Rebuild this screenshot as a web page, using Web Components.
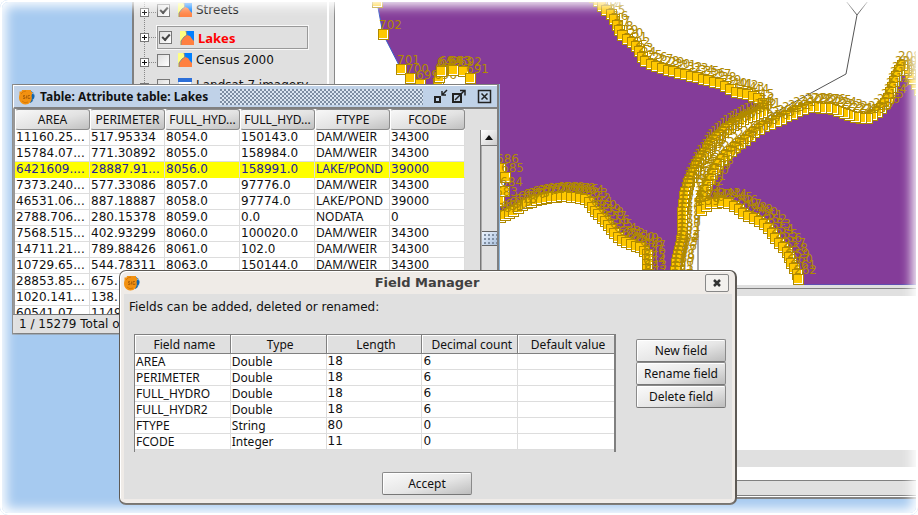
<!DOCTYPE html>
<html lang="en">
<head>
<meta charset="utf-8">
<title>Field Manager</title>
<style>
  html, body { height: 100%; margin: 0; overflow: hidden; }
  body { font: 12px/16px "Noto Sans", "DejaVu Sans", sans-serif; color: #111; background: #fff; }
</style>
</head>
<body>
<gis-desktop>
  <main-window>
    <layer-tree slot="toc">
      <layer-item checked>Streets</layer-item>
      <layer-item checked active>Lakes</layer-item>
      <layer-item>Census 2000</layer-item>
      <layer-item kind="raster">Landsat 7 imagery</layer-item>
    </layer-tree>
    <map-view slot="map"></map-view>
  </main-window>
  <table-window caption="Table: Attribute table: Lakes"></table-window>
  <field-dialog caption="Field Manager"></field-dialog>
</gis-desktop>

<script>
const define = (name, html, setup) => {
  const tpl = document.createElement('template');
  tpl.innerHTML = html;
  customElements.define(name, class extends HTMLElement {
    constructor() {
      super();
      this.attachShadow({ mode: 'open' }).append(tpl.content.cloneNode(true));
    }
    connectedCallback() { if (setup && !this.ready) { this.ready = true; setup(this, this.shadowRoot); } }
  });
};

define('app-logo', `
<style>:host { display: block; width: 16px; height: 16px; flex: none; } svg { display: block; }</style>
<svg width="16" height="16" viewBox="0 0 16 16" aria-hidden="true">
  <path d="M12 2q4 2 3.500 6q-1 4-4 6l-2-3z" fill="#1265ad"/>
  <path d="M13 4l2 1M13.500 11l2-1" stroke="#9cc7ea"/>
  <path d="M3 1h9v2h1.500l-1 4q1 3-1 6q-2 2.500-5 2.500q-4 0-6-4q-1-3 0-6V2.500h2z" fill="#f29111"/>
  <path d="M2 5q2-3 5-3M3 12q3 3 6 1" stroke="#d87905" fill="none"/>
  <path d="M6 6.500H4.500V8H6V9.500H4M7.500 6.500v3M11 6.500H9v3h2V8.500" stroke="#a45b08" fill="none" stroke-width=".8"/>
</svg>`);

define('push-button', `
<style>
  :host { display: block; }
  button { display: block; width: 100%; height: 23px; padding: 0 4px; font: 12px/16px "Noto Sans", sans-serif; color: #111;
    border: 1px solid #8a8a8a; border-bottom-color: #777; border-radius: 2px; box-shadow: inset 1px 1px #fff;
    background: linear-gradient(165deg, #fafafa 0%, #e6e6e6 55%, #bdbdbd 100%); white-space: nowrap; }
</style>
<button type="button"><slot></slot></button>`);

define('layer-item', `
<style>
  :host { display: flex; height: 25px; align-items: flex-start; font-family: "DejaVu Sans", sans-serif; }
  .knob { width: 9px; height: 9px; margin: 8px 0 0 4px; padding: 0; box-sizing: border-box; border: 1px solid #777; background:
    linear-gradient(#111,#111) center/5px 1px no-repeat, linear-gradient(#111,#111) center/1px 5px no-repeat, #fff; }
  .dots { width: 7px; margin-top: 12px; border-top: 1px dotted #888; }
  label { display: flex; align-items: center; gap: 8px; height: 20px; margin-left: 1px; white-space: nowrap; }
  :host([active]) label { width: 145px; margin-top: 1px; padding: 0 3px 0 1px; height: 21px; border: 1px solid #999; outline: 1px solid #f8f8f8;
    font: bold 13px/16px "Noto Sans", sans-serif; color: #f00; }
  input { appearance: none; box-sizing: border-box; width: 13px; height: 13px; margin: 0; border: 1px solid #777; background: linear-gradient(135deg,#ddd,#fff);
    display: grid; place-items: center; }
  input:checked::before { content: ""; width: 6px; height: 3px; border: solid #444; border-width: 0 0 2px 2px; transform: rotate(-48deg); margin-bottom: 2px; }
  svg { display: block; margin-right: -4px; }
</style>
<button class="knob" type="button" aria-label="Expand"></button><span class="dots"></span>
<label><input type="checkbox"><svg width="14" height="14" viewBox="0 0 14 14"></svg><slot></slot></label>`,
(host, root) => {
  root.querySelector('input').checked = host.hasAttribute('checked');
  root.querySelector('svg').innerHTML = host.getAttribute('kind') === 'raster'
    ? '<path d="M0 0h14v14H0z" fill="#fff" stroke="#7aa7e0"/><path d="M0 0h14v4H0z" fill="#2c6fd8"/><path d="M3 6h5v6H3z" fill="#f8a020"/><path d="M9 7h3v5H9z" fill="#bcd"/>'
    : '<path d="M0 0h14v14H0z" fill="#ffff80"/><path d="M6 0h8v14H8z" fill="#0080ff"/><path d="M1 14V10l3-4 3-2 3 1 2 3 2 2v4z" fill="#ff8040"/><path d="M6 0l1 4-3 2-3 4v4" fill="none" stroke="#888"/>';
});

define('layer-tree', `
<style>
  :host { display: block; height: 100%; background: repeating-linear-gradient(#0000 0 1px, #e0e0e0 1px 2px), linear-gradient(90deg, #e0e0e0 8px, #888 8px, #888 9px, #e0e0e0 9px); }
</style><slot></slot>`);

define('main-window', `
<style>
  :host { position: absolute; inset: 0 0 16px 132px; box-sizing: border-box; display: flex; flex-direction: column; background: #fff;
    border-left: 2px solid #808080; border-bottom: 2px solid #808080; }
  .top { display: flex; height: 285px; }
  .toc { width: 191px; border-left: 2px solid #e0e0e0; border-right: 2px solid #fff; overflow: hidden; }
  .split { width: 5px; background: #e0e0e0; border-right: 1px solid #888; }
  .map { flex: 1; min-width: 0; overflow: hidden; }
  .hsplit { height: 3px; background: #e0e0e0; border-bottom: 1px solid #808080; }
  .under { height: 7px; background: #e0e0e0; }
  .blank { flex: 1; background: #fff; }
  .bar { height: 17px; background: #e0e0e0; }
  .gap { height: 13px; }
  .status { height: 14px; background: #e0e0e0; border: solid #808080; border-width: 1px 0; margin-bottom: 1px; }
</style>
<div class="top"><div class="toc"><slot name="toc"></slot></div><div class="split"></div><div class="map"><slot name="map"></slot></div></div>
<div class="hsplit"></div><div class="under"></div><div class="blank"></div><div class="bar"></div><div class="gap"></div><div class="status"></div>`);

define('map-view', `
<style>:host { display: block; height: 100%; } svg { display: block; width: 100%; height: 100%; }
  text { font: 12px "DejaVu Sans", sans-serif; fill: #b08a00; }</style>
<svg viewBox="335 0 583 285" preserveAspectRatio="xMinYMin slice" role="img" aria-label="Lakes layer being edited">
  <g class="lakes" fill="#843c99" stroke="#3c5ec8"></g>
  <path d="M846 1L857 15L868 1M857 15L846 74L765 118M698 205V285" fill="none" stroke="#555"/>
  <g class="nodes" shape-rendering="crispEdges"></g>
</svg>`,
(host, root) => {
  const west = [[377,2],[383,34],[401,69],[410,78],[420,84],[437,86],[439,76],[443,68],[452,68],[463,71],[470,78],[492,110],[498,160],[505,177],[504,191],[500,202],[500,217]];
  const south = [[500,217],[510,213],[520,206],[535,200],[550,197],[563,196],[577,197],[587,200],[595,211],[606,222],[616,235],[625,242],[640,247],[647,254],[648,285]];
  const northEast = [[594,-3],[612,16],[622,35],[636,45],[643,60],[655,66],[680,73],[708,80],[722,84],[733,91],[748,94],[758,98],[764,104],[762,112]];
  const channelW = [[762,112],[745,118],[725,130],[710,144],[700,160],[690,178],[684,196],[682,215],[682,232],[680,248],[676,262],[674,285]];
  const northE = [[925,100],[915,82],[909,73],[902,65],[896,76],[892,88],[886,102],[879,111],[868,118],[857,118],[846,114],[834,109],[810,107],[796,112],[776,121],[762,127],[748,137],[733,149],[722,158],[714,170],[707,186],[701,198],[701,210]];
  const east = [[701,210],[709,203],[724,202],[735,206],[746,215],[760,221],[770,230],[777,241],[786,250],[791,262],[797,274],[800,285]];
  const path = a => 'M' + a.map(p => p.join(' ')).join('L') + 'Z';
  root.querySelector('.lakes').innerHTML =
    `<path d="${path([...west, ...south, ...[...channelW].reverse(), ...[...northEast].reverse()])}"/>` +
    `<path d="${path([...northE, ...east, [925,285]])}"/>`;
  const walk = (pts, step) => {
    const out = [];
    let rest = 0;
    for (let i = 1; i < pts.length; i++) {
      const [x0, y0] = pts[i - 1], [x1, y1] = pts[i], len = Math.hypot(x1 - x0, y1 - y0);
      let d = rest;
      for (; d < len; d += step) out.push([Math.round(x0 + (x1 - x0) * d / len), Math.round(y0 + (y1 - y0) * d / len)]);
      rest = d - len;
    }
    return out;
  };
  const label = ([x, y], n) => `<text x="${x - 4}" y="${y - 5}">${n}</text>`;
  const node = ([x, y]) => `<path d="M${x - 5} ${y - 5}h11v11h-11z" fill="#b08a00"/><path d="M${x - 4} ${y - 4}h9v9h-9z" fill="#fff"/><path d="M${x - 4} ${y - 4}h8v8h-8z" fill="#ffc800"/>`;
  let svg = '';
  const chain = (pts, first, dir) => {
    svg += pts.map(node).join('') + pts.map((p, i) => label(p, first + dir * i)).join('');
  };
  chain(west.slice(0, 5), 703, -1);
  chain([[438,84],[439,77],[443,70],[452,70]], 696, -1);
  chain([[441,71],[453,70]], 642, 1);
  chain([[463,71],[470,78]], 692, -1);
  chain([[500,168],[505,177],[504,191],[499,201]], 686, -1);
  chain(walk(south, 5), 682, -1);
  chain(walk(northEast, 6), 10, 1);
  chain(walk(northE, 6), 201, 1);
  chain(walk(channelW, 4), 141, 1);
  chain(walk(east, 6), 239, 1);
  root.querySelector('.nodes').innerHTML = svg;
});

define('attribute-table', `
<style>
  :host { display: block; height: 205px; overflow: hidden; background: #e0e0e0; }
  table { width: 450px; border-collapse: separate; border-spacing: 0; table-layout: fixed; background: #fff; }
  th, td { box-sizing: border-box; padding: 0; overflow: hidden; white-space: nowrap; }
  th { height: 21px; font-weight: normal; border: 1px solid #8c8c8c; border-left-color: #fff; border-radius: 3px; background: linear-gradient(165deg, #f8f8f8, #e2e2e2 55%, #c0c0c0); }
  td { height: 16px; line-height: 15px; padding-left: 1px; border: solid #ddd; border-width: 0 1px 1px 0; font-family: "DejaVu Sans", sans-serif; vertical-align: baseline; }
  td.word { font-family: "Noto Sans", sans-serif; line-height: 14px; }
  tr.on td { background: #ff0; border-color: #e8e800 #ddd #ff0 #ff0; color: #222299; }
</style>
<table><thead><tr></tr></thead><tbody></tbody></table>`,
(host, root) => {
  root.querySelector('thead tr').innerHTML = ['AREA','PERIMETER','FULL_HYD...','FULL_HYD...','FTYPE','FCODE'].map(t => `<th scope="col">${t}</th>`).join('');
  const rows = `11160.25...|517.95334|8054.0|150143.0|DAM/WEIR|34300
15784.07...|771.30892|8055.0|158984.0|DAM/WEIR|34300
6421609....|28887.91...|8056.0|158991.0|LAKE/POND|39000
7373.240...|577.33086|8057.0|97776.0|DAM/WEIR|34300
46531.06...|887.18887|8058.0|97774.0|LAKE/POND|39000
2788.706...|280.15378|8059.0|0.0|NODATA|0
7568.515...|402.93299|8060.0|100020.0|DAM/WEIR|34300
14711.21...|789.88426|8061.0|102.0|DAM/WEIR|34300
10729.65...|544.78311|8063.0|150144.0|DAM/WEIR|34300
28853.85...|675.||||
1020.141...|138.||||
60541.07...|1149||||`.split('\n');
  root.querySelector('tbody').innerHTML = rows.map((r, i) => `<tr${i === 2 ? ' class="on"' : ''}>` +
    r.split('|').map((c, k) => `<td${k === 4 ? ' class="word"' : ''}>${c}</td>`).join('') + '</tr>').join('');
});

define('table-window', `
<style>
  :host { position: absolute; left: 12px; top: 84px; width: 487px; box-sizing: border-box; display: block; background: #e0e0e0;
    border: solid #808080; border-width: 1px 2px 1px 1px; box-shadow: 1px 0 #8fb8dc, 0 1px #9ab; }
  header { display: flex; align-items: center; height: 21px; padding: 0 5px 0 5px; background: #c0d2e8; border: solid #fff; border-width: 1px 0 0 1px; border-bottom: 2px solid #808080; }
  h1 { margin: 0 12px 0 5px; font: bold 12px/16px "Noto Sans", sans-serif; white-space: nowrap; }
  .grip { flex: 1; height: 16px; margin-right: 7px; background: radial-gradient(circle at 1px 1px, #7d8da2 0 1px, #0000 1px) 0 0/4px 4px, radial-gradient(circle at 1px 1px, #7d8da2 0 1px, #0000 1px) 2px 2px/4px 4px, #dbe6f2; }
  header button { display: block; width: 15px; height: 15px; padding: 0; border: 0; background: none; margin-left: 3px; }
  header button:last-child { margin-left: 11px; }
  svg { display: block; }
  .body { display: flex; border-left: 2px solid #909090; }
  attribute-table { flex: 1; }
  .bar { width: 16px; display: flex; flex-direction: column; margin-top: 21px; border-left: 1px solid #777; background: #e0e0e0; }
  .bar button { height: 16px; padding: 0; border: 0; border-bottom: 1px solid #777; display: grid; place-items: center; background: linear-gradient(135deg, #fff, #ccc); }
  .track { flex: 1; display: flex; flex-direction: column; border-left: 1px solid #aaa; padding-top: 85px; }
  .thumb { height: 13px; border: solid #666; border-width: 1px 0; background: radial-gradient(circle at 1px 1px, #8090a4 0 1px, #0000 1px) 2px 2px/4px 4px, linear-gradient(135deg, #eef5ff, #a9c0dc); }
  footer { height: 18px; line-height: 18px; padding-left: 6px; font-family: "DejaVu Sans", sans-serif; border-top: 1px solid #777; white-space: nowrap; }
</style>
<header><app-logo></app-logo><h1></h1><div class="grip"></div>
  <button type="button" aria-label="Minimize"><svg width="15" height="15" fill="none" stroke="#222" stroke-width="2"><path d="M2 8h5v5H2z"/><path d="M14 1L9 6M9 2v4h4" stroke-width="1.500"/></svg></button>
  <button type="button" aria-label="Maximize"><svg width="15" height="15" fill="none" stroke="#222" stroke-width="2"><path d="M2 5h8v8H2z"/><path d="M4 11L13 2M9 1.500h5v5" stroke-width="1.500"/></svg></button>
  <button type="button" aria-label="Close"><svg width="15" height="15" fill="none" stroke="#222"><path d="M1.500 1.500h12v12h-12z" stroke-width="1.500"/><path d="M4.500 4.500l6 6M10.500 4.500l-6 6" stroke-width="1.500"/></svg></button>
</header>
<div class="body"><attribute-table></attribute-table>
  <div class="bar"><button type="button" aria-label="Scroll up"><svg width="8" height="5"><path d="M0 5L4 0L8 5z" fill="#111"/></svg></button><div class="track"><div class="thumb"></div></div></div></div>
<footer>1 / 15279 Total of</footer>`,
(host, root) => { root.querySelector('h1').textContent = host.getAttribute('caption'); });

define('field-table', `
<style>
  :host { display: block; border: solid #808080; border-width: 1px 2px 0 1px; padding-bottom: 2px; }
  table { width: 100%; border-collapse: separate; border-spacing: 0; table-layout: fixed; background: #fff; }
  th, td { box-sizing: border-box; padding: 0; white-space: nowrap; }
  th { height: 19px; font-weight: normal; background: #e0e0e0; border: solid #808080; border-width: 0 1px 1px 0; box-shadow: inset 1px 1px #fff; padding: 2px 0 0 4px; }
  td { height: 16px; line-height: 15px; padding-left: 1px; border: solid #ddd; border-width: 0 1px 1px 0; }
  td.num { font-family: "DejaVu Sans", sans-serif; }
  th:last-child, td:last-child { border-right: 0; }
</style>
<table><thead><tr></tr></thead><tbody></tbody></table>`,
(host, root) => {
  root.querySelector('thead tr').innerHTML = ['Field name','Type','Length','Decimal count','Default value'].map(t => `<th scope="col">${t}</th>`).join('');
  root.querySelector('tbody').innerHTML = [['AREA','Double',18,6,''],['PERIMETER','Double',18,6,''],['FULL_HYDRO','Double',18,6,''],['FULL_HYDR2','Double',18,6,''],['FTYPE','String',80,0,''],['FCODE','Integer',11,0,'']]
    .map(r => `<tr>${r.map(c => `<td${typeof c === 'number' ? ' class="num"' : ''}>${c}</td>`).join('')}</tr>`).join('');
});

define('field-dialog', `
<style>
  :host { position: absolute; left: 119px; right: 181px; top: 270px; box-sizing: border-box; display: block; border: 1px solid #5e5a55; border-right-width: 2px; border-bottom-width: 2px; border-radius: 7px; background: #efebe7; padding: 0 3px 4px 4px; box-shadow: inset 1px 1px #fff; }
  header { display: grid; grid-template-columns: 25px 1fr 27px; align-items: center; height: 23px; }
  h2 { margin: 0; text-align: center; font: bold 13px/18px "DejaVu Sans", sans-serif; color: #404040; }
  header button { width: 24px; height: 18px; padding: 0; border: 1px solid #888; border-radius: 2px; background: #f3f1ee; display: grid; place-items: center; }
  .body { background: #e0e0e0; padding: 5px 6px 4px 10px; }
  p { margin: 0 0 19px -5px; font-family: "DejaVu Sans", sans-serif; }
  .row { display: flex; gap: 20px; align-items: flex-start; }
  field-table { flex: 1; }
  .side { width: 90px; margin-top: 5px; }
  .foot { display: grid; justify-content: center; grid-template-columns: 90px; margin: 20px 6px 0 0; }
</style>
<header><app-logo></app-logo><h2></h2><button type="button" aria-label="Close"><svg width="8" height="8"><path d="M1 1L7 7M7 1L1 7" stroke="#333" stroke-width="2.500"/></svg></button></header>
<div class="body">
  <p>Fields can be added, deleted or renamed:</p>
  <div class="row"><field-table></field-table>
    <div class="side"><push-button>New field</push-button><push-button>Rename field</push-button><push-button>Delete field</push-button></div></div>
  <div class="foot"><push-button>Accept</push-button></div>
</div>`,
(host, root) => { root.querySelector('h2').textContent = host.getAttribute('caption'); });

define('gis-desktop', `
<style>
  :host { display: block; position: relative; height: 100vh; overflow: hidden; background: #a6caf0; }
  .fade { position: absolute; inset: 0; border: 2px solid #fff; border-radius: 8px; box-shadow: inset 0 0 12px 4px #fff, 0 0 0 8px #fff; pointer-events: none; }
</style>
<slot></slot><div class="fade"></div>`);
</script>
</body>
</html>
